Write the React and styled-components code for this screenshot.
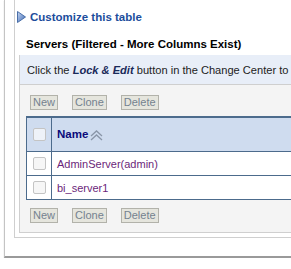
import React from 'react';
import styled, { createGlobalStyle } from 'styled-components';

const Global = createGlobalStyle`
  body {
    margin: 0;
    background: #fff;
    overflow: hidden;
    font-family: "Liberation Sans", Tahoma, sans-serif;
  }
`;

const Panel = styled.div`
  margin-left: 4px;
  width: 420px;
  height: 258px;
  border-left: 1px solid #c4c4c4;
  border-bottom: 2px solid #9a9a9a;
  box-shadow: 0 1px 1px #c8c8c8;
  padding-left: 9px;
  box-sizing: border-box;
`;

const Frame = styled.div`
  border-left: 1px solid #cfcfcf;
  border-bottom: 1px solid #cfcfcf;
  padding: 0 0 4px 2px;
`;

const Customize = styled.div`
  display: flex;
  align-items: center;
  gap: 4px;
  height: 34px;
  color: #1c4d9c;
  font-weight: bold;
  font-size: 11.5px;
`;

const Title = styled.div`
  margin-left: 9px;
  height: 21px;
  line-height: 21px;
  font-weight: bold;
  font-size: 11.5px;
  color: #000;
`;

const Region = styled.div`
  margin-left: 2px;
  border-left: 1px solid #cfcfcf;
  border-bottom: 1px solid #cfcfcf;
`;

const Notice = styled.div`
  height: 29px;
  line-height: 30px;
  background: #e8eef8;
  border-bottom: 1px solid #cfcfcf;
  padding-left: 7px;
  font-size: 11.1px;
  color: #222;
  white-space: nowrap;
  overflow: hidden;
  b {
    color: #1a2a5a;
    font-style: italic;
  }
`;

const Body = styled.div`
  background: #f4f4f4;
  padding: 10px 0 9px 6px;
`;

const Toolbar = styled.div`
  display: flex;
  gap: 14px;
  padding-left: 4px;
  margin-bottom: ${({ $gap }) => $gap || 0}px;
`;

const Button = styled.button`
  height: 15px;
  padding: 0 2px;
  border: 1px solid #b2b2aa;
  background: #e5e5dd;
  color: #74828f;
  font-family: "Liberation Sans", Arial, sans-serif;
  font-size: 11px;
  line-height: 13px;
  margin: 0;
`;

const Table = styled.table`
  border-collapse: collapse;
  width: 400px;
  border: 1px solid #4c6b8c;
  border-top-width: 2px;
  margin-bottom: 8px;
  font-size: 11px;
`;

const HeadCell = styled.th`
  height: 33px;
  background: #cfdcef;
  border-bottom: 1px solid #4c6b8c;
  border-left: 1px solid #4c6b8c;
  text-align: left;
  padding: 0 0 0 5px;
  color: #0a0a7a;
  font-weight: bold;
  font-size: 11.5px;
  width: ${({ $w }) => ($w ? `${$w}px` : 'auto')};
`;

const Cell = styled.td`
  height: 23px;
  background: #fff;
  border-bottom: 1px solid #4c6b8c;
  border-left: 1px solid #4c6b8c;
  padding: 0 0 0 5px;
  color: #6b1f7a;
`;

const Check = styled.span`
  display: block;
  width: 11px;
  height: 11px;
  margin-left: 1px;
  border: 1px solid #c4c4c4;
  border-radius: 2px;
  background: ${({ $head }) => ($head ? '#eef2f8' : '#f6f6f6')};
`;

const Sort = styled.span`
  display: inline-flex;
  vertical-align: middle;
  margin-left: 2px;
`;

const Arrow = () => (
  <svg width="9" height="12" viewBox="0 0 9 12">
    <defs>
      <linearGradient id="tri" x1="0" y1="0" x2="1" y2="1">
        <stop offset="0" stopColor="#c9d9f2" />
        <stop offset="1" stopColor="#3a66b4" />
      </linearGradient>
    </defs>
    <path d="M0.5 0.5 L8.5 6 L0.5 11.5 Z" fill="url(#tri)" stroke="#4a6fa8" strokeWidth="1" />
  </svg>
);

const SortIcon = () => (
  <svg width="13" height="11" viewBox="0 0 13 11">
    <path d="M1 6 L6.5 1 L12 6" fill="none" stroke="#8a96a8" strokeWidth="1.3" />
    <path d="M1 10 L6.5 5 L12 10" fill="none" stroke="#8a96a8" strokeWidth="1.3" />
  </svg>
);

const Buttons = ({ gap }) => (
  <Toolbar $gap={gap}>
    <Button>New</Button>
    <Button>Clone</Button>
    <Button>Delete</Button>
  </Toolbar>
);

const rows = ['AdminServer(admin)', 'bi_server1'];

export default function App() {
  return (
    <>
      <Global />
      <Panel>
        <Frame>
          <Customize>
            <Arrow />
            Customize this table
          </Customize>
          <Title>Servers (Filtered - More Columns Exist)</Title>
          <Region>
            <Notice>
              Click the <b>Lock &amp; Edit</b> button in the Change Center to modify the settings
            </Notice>
            <Body>
              <Buttons gap={6} />
              <Table>
                <thead>
                  <tr>
                    <HeadCell $w={19}><Check $head /></HeadCell>
                    <HeadCell>
                      Name
                      <Sort><SortIcon /></Sort>
                    </HeadCell>
                  </tr>
                </thead>
                <tbody>
                  {rows.map((r) => (
                    <tr key={r}>
                      <Cell><Check /></Cell>
                      <Cell>{r}</Cell>
                    </tr>
                  ))}
                </tbody>
              </Table>
              <Buttons />
            </Body>
          </Region>
        </Frame>
      </Panel>
    </>
  );
}
